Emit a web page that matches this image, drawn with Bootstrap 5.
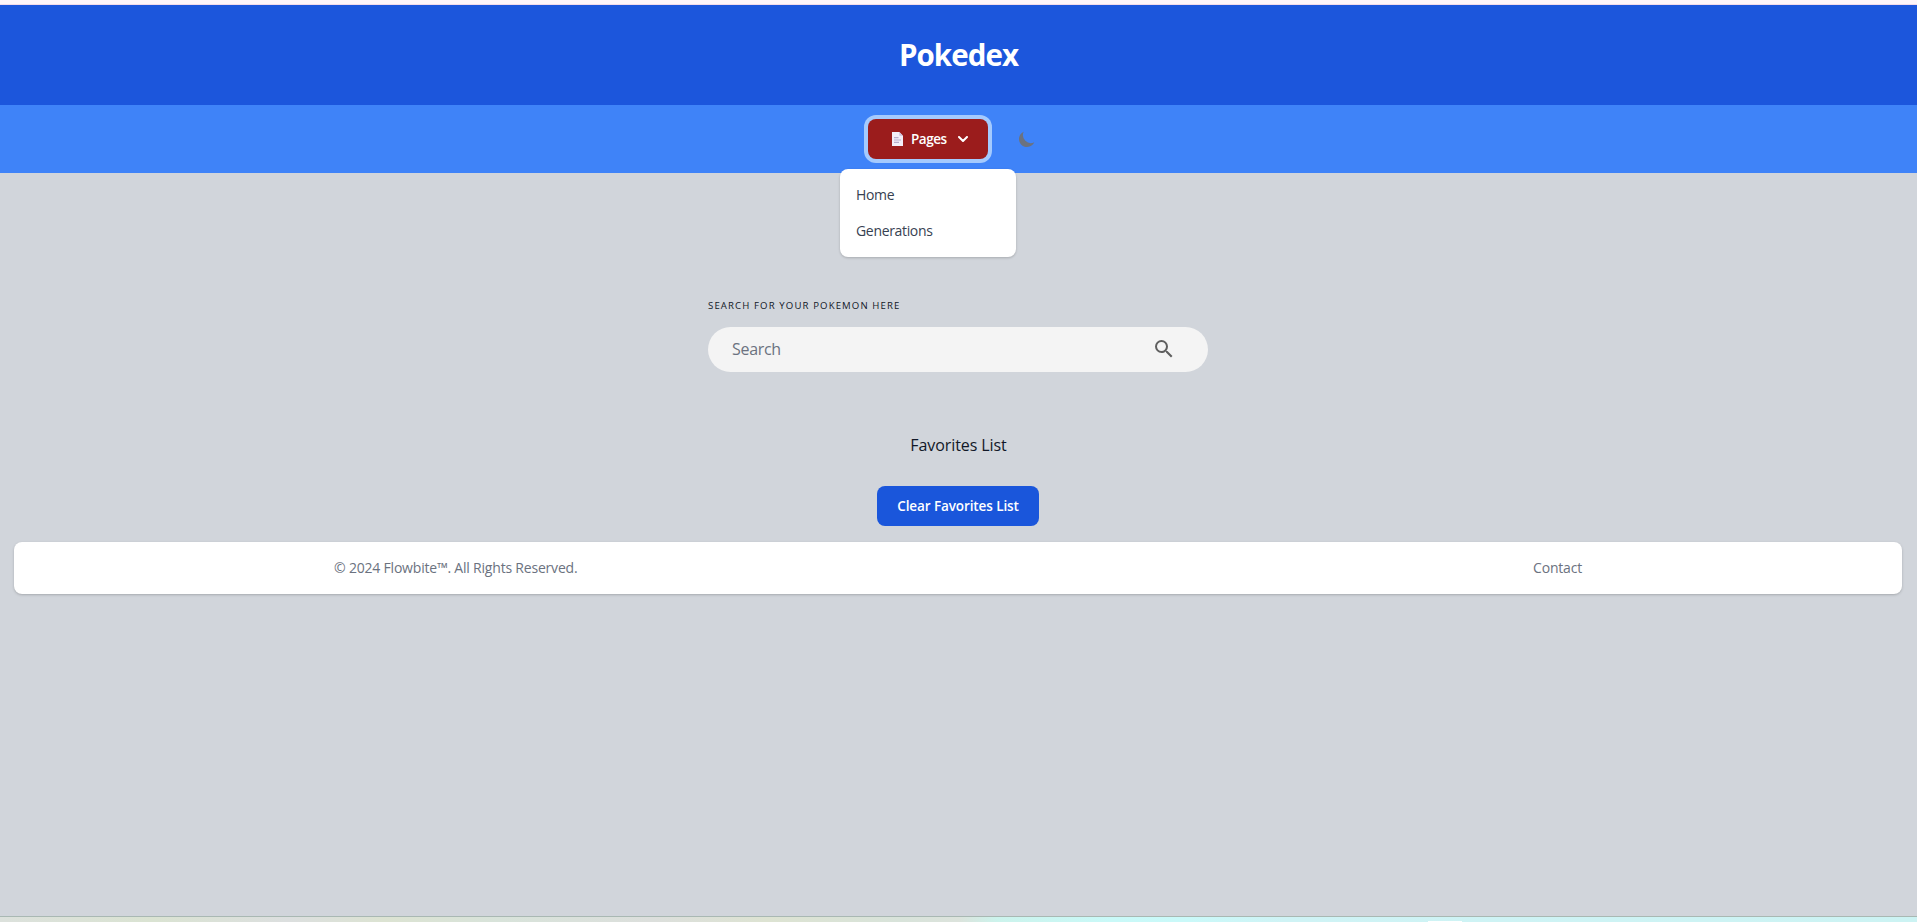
<!DOCTYPE html>
<html lang="en">
<head>
<meta charset="utf-8">
<meta name="viewport" content="width=device-width, initial-scale=1">
<title>Pokedex</title>
<link href="https://cdn.jsdelivr.net/npm/bootstrap@5.3.0/dist/css/bootstrap.min.css" rel="stylesheet">
<style>
  body { font-family: "Trebuchet MS", "Open Sans", "Noto Sans", sans-serif; background: #d1d5db; color: #111827; height: 922px; overflow: hidden; }
  .window-top { height: 5px; background: #fdf5fa; border-bottom: 1px solid #f3dbe9; }
  .site-head { height: 100px; background: #1c56dc; }
  .site-title { font-size: 29.5px; line-height: 36px; font-weight: 700; letter-spacing: -.95px; }
  .site-nav { height: 68px; padding-top: 14px; background: #3f83f8; }
  .nav-inner { width: 181px; gap: 20px; }
  .btn-pages { width: 120px; height: 40px; background: #9b1c1c; border: 0; border-radius: 8px; color: #fff; font-size: 13.5px; font-weight: 600; letter-spacing: -.45px; box-shadow: 0 0 0 4px #a4cafe; padding: 0 0 0 24px; }
  .btn-pages:hover { background: #9b1c1c; color: #fff; }
  .pages-label { width: 47px; margin-left: 8px; text-align: left; }
  .pages-menu { top: 50px; left: -28px; width: 176px; height: 88px; padding: 8px 0; border: 0; border-radius: 8px; box-shadow: 0 1px 3px rgba(0,0,0,.12), 0 1px 2px rgba(0,0,0,.08); }
  .pages-menu .dropdown-item { height: 36px; padding: 8px 16px; font-size: 14px; line-height: 20px; letter-spacing: -.33px; color: #374151; }
  .btn-theme { width: 38px; height: 40px; }
  .search-box { width: 500px; margin-top: 126px; margin-left: 708px; }
  .search-label { font-size: 9.6px; line-height: 14px; letter-spacing: 1.12px; margin-bottom: 14px; }
  .search-field { height: 45px; background: #f4f4f4; padding: 0 32px 2px 24px; }
  .search-field input { width: 300px; font-size: 16px; letter-spacing: -.3px; color: #6b7280; }
  .search-field input::placeholder { color: #6b7280; opacity: 1; }
  .fav-title { margin-top: 61px; font-size: 16px; line-height: 24px; letter-spacing: -.08px; }
  .btn-clear { margin: 29px 0 0 877px; width: 162px; height: 40px; background: #1a56db; border: 0; border-radius: 8px; color: #fff; font-size: 13.5px; line-height: 20px; font-weight: 600; letter-spacing: -.1px; padding: 0 0 1px; }
  .site-foot { margin: 16px 15px 0 14px; height: 52px; border-radius: 8px; background: #fff; color: #6b7280; font-size: 14px; line-height: 20px; letter-spacing: -.2px; box-shadow: 0 1px 3px rgba(0,0,0,.16), 0 1px 2px -1px rgba(0,0,0,.16); }
  .foot-inner { width: 1248px; }
  .window-bottom { height: 6px; border-top: 1px solid #a9b8b3; background: linear-gradient(90deg, #dce1dc 0, #dae3d2 8%, #dcdfdf 15%, #dce3d2 20%, #d8e3da 26%, #dcdfdc 34%, #dde3d2 40%, #d8e3da 47%, #dce3dc 50%, #ccf3ec 52%, #c9f9f8 58%, #caf9f9 62%, #cff3f5 67%, #ccf3f3 100%); }
  .window-tab { height: 1px; width: 34px; margin-left: 1428px; background: #fff; }
</style>
</head>
<body class="d-flex flex-column">
  <div class="window-top flex-shrink-0"></div>
  <header class="site-head d-flex align-items-center justify-content-center flex-shrink-0">
    <h1 class="site-title text-white m-0">Pokedex</h1>
  </header>
  <nav class="site-nav flex-shrink-0">
    <div class="nav-inner d-flex mx-auto">
      <div class="dropdown">
        <button class="btn btn-pages d-flex align-items-center" type="button" aria-expanded="true">
          <svg width="11" height="14" viewBox="0 0 11 14" class="flex-shrink-0"><path d="M0 0h7.3L11 3.7V14H0z" fill="#f3eef8"/><path d="M7.3 0v3.7H11z" fill="#cdc1dd"/><path d="M2 5.6h4.5M2 8h7M2 10.4h5" stroke="#b8adcb" stroke-width="1.1"/></svg>
          <span class="pages-label">Pages</span>
          <svg class="flex-shrink-0" width="10" height="6" viewBox="0 0 10 6" fill="none" stroke="#fff" stroke-width="2" stroke-linecap="round" stroke-linejoin="round"><path d="m1 1 4 4 4-4"/></svg>
        </button>
        <ul class="dropdown-menu pages-menu show">
          <li><a class="dropdown-item" href="#">Home</a></li>
          <li><a class="dropdown-item" href="#">Generations</a></li>
        </ul>
      </div>
      <button class="btn btn-theme border-0 p-0 d-flex align-items-center justify-content-center" type="button" aria-label="Dark mode"><svg width="20" height="20" viewBox="0 0 20 20" fill="#6b7280"><path d="M17.293 13.293A8 8 0 016.707 2.707a8.001 8.001 0 1010.586 10.586z"/></svg></button>
    </div>
  </nav>
  <main class="d-flex flex-column">
    <section class="search-box">
      <div class="search-label">SEARCH FOR YOUR POKEMON HERE</div>
      <div class="search-field rounded-pill d-flex align-items-center justify-content-between">
        <input class="border-0 bg-transparent p-0" type="text" placeholder="Search" aria-label="Search">
        <svg width="24" height="24" viewBox="0 0 24 24" fill="#5f5f5f"><path d="M15.5 14h-.79l-.28-.27A6.47 6.47 0 0 0 16 9.5 6.5 6.5 0 1 0 9.5 16c1.61 0 3.09-.59 4.23-1.57l.27.28v.79l5 4.99L20.49 19l-4.99-5zm-6 0C7.01 14 5 11.99 5 9.5S7.01 5 9.5 5 14 7.01 14 9.5 11.99 14 9.5 14z"/></svg>
      </div>
    </section>
    <div class="fav-title text-center">Favorites List</div>
    <button class="btn btn-clear" type="button">Clear Favorites List</button>
  </main>
  <footer class="site-foot d-flex align-items-center justify-content-center">
    <div class="foot-inner d-flex justify-content-between"><span>© 2024 Flowbite™. All Rights Reserved.</span><span>Contact</span></div>
  </footer>
  <div class="window-bottom mt-auto flex-shrink-0 d-flex align-items-end"><div class="window-tab"></div></div>
<script src="https://cdn.jsdelivr.net/npm/bootstrap@5.3.0/dist/js/bootstrap.bundle.min.js"></script>
</body>
</html>
